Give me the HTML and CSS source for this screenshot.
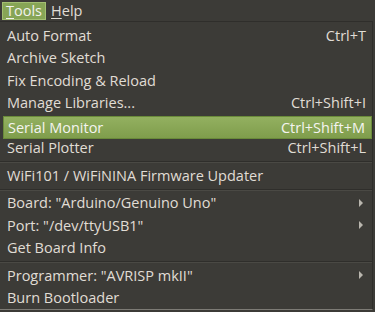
FILE: index.html
```html
<!DOCTYPE html>
<html>
<head>
    <title>Tools menu</title>
    <link rel="stylesheet" href="styles.css">
</head>
<body>
    <div class="menubar">
        <span class="menubar-item active"><u>T</u>ools</span>
        <span class="menubar-item"><u>H</u>elp</span>
    </div>
    <div class="menu">
        <div class="menu-item"><span>Auto Format</span><span class="accel">Ctrl+T</span></div>
        <div class="menu-item"><span>Archive Sketch</span></div>
        <div class="menu-item"><span>Fix Encoding &amp; Reload</span></div>
        <div class="menu-item"><span>Manage Libraries...</span><span class="accel">Ctrl+Shift+I</span></div>
        <div class="menu-item selected"><span>Serial Monitor</span><span class="accel">Ctrl+Shift+M</span></div>
        <div class="menu-item"><span>Serial Plotter</span><span class="accel">Ctrl+Shift+L</span></div>
        <div class="separator"></div>
        <div class="menu-item"><span>WiFi101 / WiFiNINA Firmware Updater</span></div>
        <div class="separator"></div>
        <div class="menu-item"><span>Board: "Arduino/Genuino Uno"</span><span class="arrow"></span></div>
        <div class="menu-item"><span>Port: "/dev/ttyUSB1"</span><span class="arrow"></span></div>
        <div class="menu-item"><span>Get Board Info</span></div>
        <div class="separator"></div>
        <div class="menu-item"><span>Programmer: "AVRISP mkII"</span><span class="arrow"></span></div>
        <div class="menu-item"><span>Burn Bootloader</span></div>
    </div>
</body>
</html>
```

FILE: styles.css
```css
body {
    margin: 0;
    background-color: #3c3b37;
    font-family: "Open Sans", sans-serif;
    font-size: 14.5px;
    color: #e0ddd5;
}

u {
    text-decoration: underline;
    text-underline-offset: 2px;
}

.menubar {
    display: flex;
    height: 21px;
    padding: 2px 0 0 2px;
    box-sizing: border-box;
    background-color: #3c3b37;
}

.menubar-item {
    display: flex;
    align-items: center;
    height: 18px;
    padding: 0 3px;
    line-height: 18px;
}

.menubar-item.active {
    background-color: #87a556;
    border: 1px solid #a3bf72;
    box-sizing: border-box;
    color: #f2f2ee;
    margin-right: 2px;
}

.menu {
    display: flex;
    flex-direction: column;
    margin: 0 2px 0 0;
    padding: 2px 0 0 0;
    border-top: 1px solid #2f2e2b;
    border-bottom: 1px solid #7d7b75;
    border-right: 1px solid #2f2e2b;
    height: 289px;
    box-sizing: border-box;
}

.menu-item {
    display: flex;
    justify-content: space-between;
    align-items: center;
    height: 23px;
    padding: 0 6px 0 7px;
    white-space: nowrap;
}

.menu-item.selected {
    margin: 2px 0 -2px 3px;
    padding-left: 4px;
    background: linear-gradient(#93b060, #7f9d4c);
    border: 1px solid #6a8a3a;
    box-sizing: border-box;
    color: #f4f4f0;
}

.accel {
    text-align: right;
}

.arrow {
    width: 0;
    height: 0;
    margin-right: 3px;
    border-top: 4px solid transparent;
    border-bottom: 4px solid transparent;
    border-left: 4px solid #b9b6ae;
}

.separator {
    margin: 2px 0 1px 0;
    border-top: 1px solid #2f2e2b;
    border-bottom: 1px solid #4a4944;
}
```
